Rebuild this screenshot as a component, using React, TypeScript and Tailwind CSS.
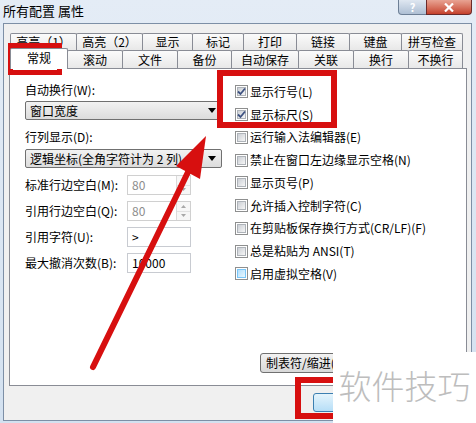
import React from "react";

const row1 = [
  { label: "高亮（1）", w: 67 },
  { label: "高亮（2）", w: 67 },
  { label: "显示", w: 51 },
  { label: "标记", w: 52 },
  { label: "打印", w: 54 },
  { label: "链接", w: 54 },
  { label: "键盘", w: 53 },
  { label: "拼写检查", w: 62 },
];

const row2 = [
  { label: "常规", w: 58 },
  { label: "滚动", w: 56 },
  { label: "文件", w: 56 },
  { label: "备份", w: 55 },
  { label: "自动保存", w: 68 },
  { label: "关联", w: 56 },
  { label: "换行", w: 56 },
  { label: "不换行", w: 55 },
];

const checks = [
  { label: "显示行号(L)", on: true },
  { label: "显示标尺(S)", on: true },
  { label: "运行输入法编辑器(E)", on: false },
  { label: "禁止在窗口左边缘显示空格(N)", on: false },
  { label: "显示页号(P)", on: false },
  { label: "允许插入控制字符(C)", on: false },
  { label: "在剪贴板保存换行方式(CR/LF)(F)", on: false },
  { label: "总是粘贴为 ANSI(T)", on: false },
  { label: "启用虚拟空格(V)", on: false, hover: true },
];

function Tab({ label, w, first }: { label: string; w: number; first?: boolean }) {
  return (
    <div
      className={
        "flex items-center justify-center border border-b-0 border-[#898c95] rounded-t-[2px] bg-gradient-to-b from-[#fbfbfb] to-[#e8e8e8] leading-none " +
        (first ? "" : "-ml-px")
      }
      style={{ width: w }}
    >
      {label}
    </div>
  );
}

function Checkbox({ on, hover }: { on: boolean; hover?: boolean }) {
  return (
    <div className="flex h-[13px] w-[13px] items-center justify-center border border-[#8e8f8f] bg-white">
      <div
        className={
          "relative h-[9px] w-[9px] border " +
          (hover
            ? "border-[#79c6f9] bg-gradient-to-br from-[#b1dffd] to-[#e9f7fe]"
            : "border-[#aeb3b9] bg-gradient-to-br from-[#cbcfd5] to-[#f6f6f6]")
        }
      >
        {on && (
          <svg className="absolute -left-[2px] -top-[2px]" width="11" height="11" viewBox="0 0 11 11">
            <path d="M2 5.5 L4.5 8 L9 2.5" fill="none" stroke="#3d5180" strokeWidth="1.8" />
          </svg>
        )}
      </div>
    </div>
  );
}

function Combo({ text }: { text: string }) {
  return (
    <div className="flex h-[19px] w-[197px] items-center rounded-[2px] border border-[#707070] bg-gradient-to-b from-[#f2f2f2] to-[#dcdcdc] pl-[4px]">
      <span className="leading-none">{text}</span>
      <svg className="ml-auto mr-[5px]" width="8" height="5" viewBox="0 0 8 5">
        <path d="M0 0 H8 L4 5 Z" fill="#000" />
      </svg>
    </div>
  );
}

function Spinner() {
  return (
    <div className="ml-auto flex h-full w-[14px] flex-col border-l border-[#dadada]">
      <div className="flex flex-1 items-center justify-center border-b border-[#e2e2e2] bg-[#f7f7f7]">
        <svg width="5" height="3" viewBox="0 0 5 3">
          <path d="M0 3 L2.5 0 L5 3 Z" fill="#a8a8a8" />
        </svg>
      </div>
      <div className="flex flex-1 items-center justify-center bg-[#f7f7f7]">
        <svg width="5" height="3" viewBox="0 0 5 3">
          <path d="M0 0 L2.5 3 L5 0 Z" fill="#a8a8a8" />
        </svg>
      </div>
    </div>
  );
}

function Field({ label, value, disabled }: { label: string; value: string; disabled?: boolean }) {
  return (
    <div className="flex h-[20px] items-center">
      <span className="w-[102px] leading-none">{label}</span>
      <div
        className={
          "flex h-[20px] w-[64px] items-center border bg-white pl-[4px] " +
          (disabled ? "border-[#d0d0d0] text-[#8d8d8d]" : "border-[#c8cbd1] text-black")
        }
      >
        <span className="leading-none">{value}</span>
        {disabled && <Spinner />}
      </div>
    </div>
  );
}

export default function App() {
  return (
    <div className="relative h-[423px] w-[476px] overflow-hidden bg-gradient-to-b from-[#e4ecf6] to-[#d3e1f0] font-['Noto_Sans_CJK_SC',sans-serif] text-[12px] text-black">
      {/* title bar */}
      <div className="flex h-[23px] items-start">
        <div className="pl-[3px] pt-[3px] text-[13px] leading-[15px]">所有配置 属性</div>
        <div className="ml-auto mr-[4px] flex">
          <div className="flex h-[15px] w-[29px] items-center justify-center rounded-bl-[4px] border border-t-0 border-[#6d7f96] bg-gradient-to-b from-[#dfe7f1] to-[#aebfd4] text-[11px] font-bold leading-none text-white">
            ?
          </div>
          <div className="-ml-px flex h-[15px] w-[46px] items-center justify-center rounded-br-[4px] border border-t-0 border-[#6b2a2a] bg-gradient-to-b from-[#e8a393] to-[#c4402c]">
            <svg width="10" height="9" viewBox="0 0 10 9">
              <path d="M1 0.5 L9 8.5 M9 0.5 L1 8.5" stroke="#fff" strokeWidth="2.2" />
            </svg>
          </div>
        </div>
      </div>

      {/* client area */}
      <div className="ml-[3px] mr-[4px] flex h-[398px] flex-col border border-[#7d8fa6] bg-[#f0f0f0] pl-[5px] pr-[4px] pt-[9px]">
        <div className="flex h-[17px] pl-[1px]">
          {row1.map((t, i) => (
            <Tab key={t.label} label={t.label} w={t.w} first={i === 0} />
          ))}
        </div>
        <div className="relative z-10 flex h-[18px] pl-[1px]">
          {row2.map((t, i) =>
            i === 0 ? (
              <div
                key={t.label}
                className="-mt-[2px] flex h-[21px] items-center justify-center rounded-t-[2px] border border-b-0 border-[#898c95] bg-white pb-[2px] leading-none"
                style={{ width: t.w }}
              >
                {t.label}
              </div>
            ) : (
              <Tab key={t.label} label={t.label} w={t.w} />
            )
          )}
        </div>

        {/* tab page */}
        <div className="flex h-[318px] flex-col border border-[#898c95] bg-white">
          <div className="flex">
            <div className="flex w-[212px] flex-col pl-[15px] pt-[13px]">
              <div className="flex h-[16px] items-center leading-none">自动换行(W):</div>
              <div className="mt-[3px]">
                <Combo text="窗口宽度" />
              </div>
              <div className="mt-[9px] flex h-[16px] items-center leading-none">行列显示(D):</div>
              <div className="mt-[4px]">
                <Combo text="逻辑坐标(全角字符计为 2 列)" />
              </div>
              <div className="mt-[7px] flex flex-col gap-[6px]">
                <Field label="标准行边空白(M):" value="80" disabled />
                <Field label="引用行边空白(Q):" value="80" disabled />
                <Field label="引用字符(U):" value=">" />
                <Field label="最大撤消次数(B):" value="10000" />
              </div>
            </div>
            <div className="flex flex-col pl-[13px] pt-[11.5px]">
              {checks.map((c) => (
                <div key={c.label} className="flex h-[22.75px] items-center gap-[2px]">
                  <Checkbox on={c.on} hover={c.hover} />
                  <span className="leading-none">{c.label}</span>
                </div>
              ))}
            </div>
          </div>
          <div className="mb-[12px] ml-[250px] mt-auto flex">
            <div className="flex h-[20px] w-[104px] items-center rounded-[3px] border border-[#707070] bg-gradient-to-b from-[#f2f2f2] to-[#d8d8d8] pl-[5px] leading-none">
              制表符/缩进(I)...
            </div>
          </div>
        </div>

        {/* dialog buttons */}
        <div className="flex pl-[304px] pt-[7px]">
          <div className="h-[19px] w-[75px] rounded-[3px] border border-[#3c7fb1] bg-gradient-to-b from-[#e5f4fc] to-[#b6def7]" />
        </div>
      </div>

      {/* annotations */}
      <div className="pointer-events-none absolute left-[8px] top-[43px] h-[32px] w-[54px] border-[5px] border-[#d70f0f]" />
      <div className="pointer-events-none absolute left-[217px] top-[70px] h-[58px] w-[120px] border-[6px] border-[#d70f0f]" />
      <div className="pointer-events-none absolute left-[295px] top-[377px] h-[42px] w-[80px] border-[6px] border-[#d70f0f]" />
      <svg className="pointer-events-none absolute left-0 top-0" width="476" height="423" viewBox="0 0 476 423">
        <line x1="93" y1="367" x2="190" y2="168" stroke="#d70f0f" strokeWidth="6" strokeLinecap="round" />
        <path d="M206 136 L200 179 L176 166 Z" fill="#d70f0f" />
      </svg>

      {/* watermark */}
      <div className="absolute left-[333px] top-[352px] flex h-[71px] w-[143px] items-center justify-center bg-white pb-[4px] text-[33px] font-light leading-none text-[#bdbdbd]">
        软件技巧
      </div>
    </div>
  );
}
